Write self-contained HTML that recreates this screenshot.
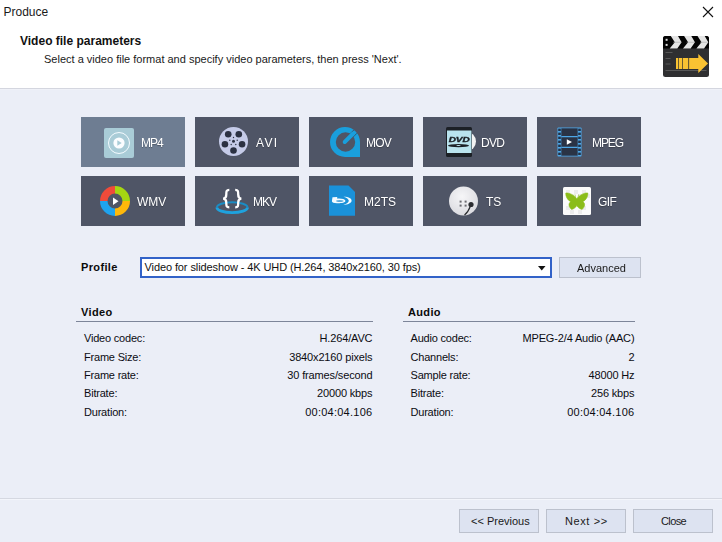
<!DOCTYPE html>
<html><head><meta charset="utf-8">
<style>
*{margin:0;padding:0;box-sizing:border-box}
html,body{width:722px;height:542px;overflow:hidden}
body{position:relative;background:#ebeef7;font-family:"Liberation Sans",sans-serif;color:#1a1a1a;font-size:11px}
.a{position:absolute;white-space:pre;line-height:1}
#hdr{position:absolute;left:0;top:0;width:722px;height:88px;background:#fff}
#hline{position:absolute;left:0;top:88px;width:722px;height:1px;background:#d4d6df}
#hline2{position:absolute;left:0;top:89px;width:722px;height:1px;background:#eff1f8}
.fb{position:absolute;width:104px;height:50px;background:#4f5566}
.fb.sel{background:#6e7d92}
.fb svg{position:absolute}
.fl{position:absolute;color:#fff;font-size:12px;line-height:1;white-space:pre;text-shadow:0 1px 1px rgba(0,0,0,.3);will-change:transform}
.lbl{position:absolute;white-space:pre;line-height:1;font-size:11px;color:#0c0c12;letter-spacing:-.2px}
.val{position:absolute;white-space:pre;line-height:1;font-size:11px;color:#0c0c12;text-align:right;letter-spacing:-.15px}
.btn{position:absolute;background:#dde3f1;border:1px solid #bcc1cd;font-size:11px;line-height:1;color:#1a1a1a}
.btn span{position:absolute;white-space:pre}
</style></head><body>
<div id="hdr"></div>
<div id="hline"></div>
<div id="hline2"></div>
<div class="a" style="left:3.5px;top:6px;font-size:12px;color:#1a1a1a">Produce</div>
<svg style="position:absolute;left:702px;top:6px" width="12" height="12" viewBox="0 0 12 12"><path d="M1 1L11 11M11 1L1 11" stroke="#111" stroke-width="1.1"/></svg>
<div class="a" style="left:20px;top:35px;font-size:12px;font-weight:bold;color:#111">Video file parameters</div>
<div class="a" style="left:44px;top:54px;font-size:11px;color:#1a1a1a">Select a video file format and specify video parameters, then press 'Next'.</div>

<!-- clapboard icon -->
<svg style="position:absolute;left:663px;top:36px" width="46" height="41" viewBox="0 0 46 41">
<rect x="0" y="0" width="46" height="41" rx="2.5" fill="#2f2f31"/>
<path d="M2.5 0H43.5A2.5 2.5 0 0 1 46 2.5V12.6H0V2.5A2.5 2.5 0 0 1 2.5 0z" fill="#040404"/>
<path d="M7.8 0L11.8 6.25L6.7 12.6H14.3L18.6 6.25L15 0z M21.1 0L25.1 6.25L20 12.6H27.6L31.9 6.25L28.3 0z M34.5 0L38.5 6.25L33.4 12.6H41L45.3 6.25L41.7 0z" fill="#e4e4e4"/>
<path d="M10 6.25H18M23.5 6.25H31.5M37 6.25H45" stroke="#9a9a9a" stroke-width=".5"/>
<rect x="2.6" y="2.8" width="2" height="2" fill="#ddd"/><rect x="2.6" y="7.9" width="2" height="2" fill="#ddd"/>
<path d="M2.5 16.5h7M2.5 22.5h5M2.5 28h5M2.5 34.5h41" stroke="#6a6a6a" stroke-width="0.7"/>
<rect x="13" y="22" width="2.3" height="11" fill="#f9c232"/>
<rect x="16" y="22" width="3.3" height="11" fill="#f9c232"/>
<rect x="20" y="22" width="5.3" height="11" fill="#f9c232"/>
<path d="M26.1 22H35.3V18.1L45 27.5L35.3 36.9V33H26.1z" fill="#f9c232"/>
</svg>

<!-- format buttons -->
<div class="fb sel" style="left:81px;top:117px">
 <svg style="left:23px;top:11px" width="30" height="30" viewBox="0 0 30 30">
  <rect x="0" y="0" width="30" height="30" rx="2" fill="#a9ccd7"/>
  <circle cx="15" cy="15" r="10.5" fill="none" stroke="#f4fbff" stroke-width="1"/>
  <circle cx="15" cy="15" r="5.6" fill="#fbfdff"/>
  <path d="M13.3 12.2v5.6l4.4-2.8z" fill="#a9ccd7"/>
 </svg>
 <div class="fl" style="left:60px;top:20px;letter-spacing:-1px">MP4</div>
</div>
<div class="fb" style="left:195px;top:117px">
 <svg style="left:23px;top:9px" width="32" height="32" viewBox="0 0 32 32">
  <circle cx="15.5" cy="15.5" r="14.5" fill="#c5cbe8"/>
  <g fill="#2b3142">
   <circle cx="15.5" cy="24.5" r="3.3"/><circle cx="6.94" cy="18.28" r="3.3"/><circle cx="10.21" cy="8.22" r="3.3"/><circle cx="20.79" cy="8.22" r="3.3"/><circle cx="24.06" cy="18.28" r="3.3"/>
   <circle cx="15.5" cy="15.2" r="1.5"/>
   <circle cx="15.5" cy="11.5" r=".7"/><circle cx="19.2" cy="14.2" r=".7"/><circle cx="17.8" cy="18.5" r=".7"/><circle cx="13.2" cy="18.5" r=".7"/><circle cx="11.8" cy="14.2" r=".7"/>
  </g>
 </svg>
 <div class="fl" style="left:60.5px;top:20px;letter-spacing:1.3px">AVI</div>
</div>
<div class="fb" style="left:309px;top:117px">
 <svg style="left:20px;top:9px" width="32" height="32" viewBox="0 0 32 32">
  <path d="M16 1A15 15 0 1 0 16 31H31V16A15 15 0 0 0 16 1z M16.5 6.3A9.7 9.7 0 1 1 16.5 25.7A9.7 9.7 0 1 1 16.5 6.3z" fill="#1a9fdc" fill-rule="evenodd"/>
  <path d="M24.2 11L28 7.2M21 7.8L24.8 4" stroke="#3a4658" stroke-width=".8"/>
  <path d="M15.7 16L24.2 7.5" stroke="#1a9fdc" stroke-width="4" stroke-linecap="round"/>
 </svg>
 <div class="fl" style="left:57px;top:20px;letter-spacing:-.8px">MOV</div>
</div>
<div class="fb" style="left:423px;top:117px">
 <svg style="left:22px;top:9px" width="32" height="32" viewBox="0 0 32 32">
  <circle cx="21" cy="15.5" r="10" fill="#f2f2f2"/>
  <rect x="1" y="1" width="26" height="30" rx="1.5" fill="#1c2026"/>
  <rect x="2" y="4.5" width="24.5" height="22.5" fill="#b9e3ee"/>
  <text transform="translate(14.2 16.4) scale(1 .78)" font-family="Liberation Sans" font-weight="bold" font-style="italic" font-size="10" text-anchor="middle" fill="#1c2026" stroke="#1c2026" stroke-width=".5" style="will-change:transform">DVD</text>
  <ellipse cx="13.5" cy="19.6" rx="10.5" ry="1.7" fill="#1c2026"/>
  <ellipse cx="13.5" cy="19.5" rx="2.2" ry=".6" fill="#b9e3ee"/>
 </svg>
 <div class="fl" style="left:58px;top:20px;letter-spacing:-.7px">DVD</div>
</div>
<div class="fb" style="left:537px;top:117px">
 <svg style="left:19px;top:9px" width="28" height="32" viewBox="0 0 28 32">
  <rect x="1.5" y="1.5" width="24" height="29" rx=".8" fill="#4ea6e6"/>
  <rect x="5.3" y="2.3" width="16.4" height="27.4" fill="#2a3345"/>
  <path d="M5.3 10.6h16.4M5.3 21.4h16.4" stroke="#4ea6e6" stroke-width="1.1"/>
  <g fill="#243247"><rect x="2.2" y="2.6" width="2.6" height="2.4"/><rect x="2.2" y="6.6" width="2.6" height="2.4"/><rect x="2.2" y="10.6" width="2.6" height="2.4"/><rect x="2.2" y="14.6" width="2.6" height="2.4"/><rect x="2.2" y="18.6" width="2.6" height="2.4"/><rect x="2.2" y="22.6" width="2.6" height="2.4"/><rect x="2.2" y="26.6" width="2.6" height="2.4"/><rect x="22.2" y="2.6" width="2.6" height="2.4"/><rect x="22.2" y="6.6" width="2.6" height="2.4"/><rect x="22.2" y="10.6" width="2.6" height="2.4"/><rect x="22.2" y="14.6" width="2.6" height="2.4"/><rect x="22.2" y="18.6" width="2.6" height="2.4"/><rect x="22.2" y="22.6" width="2.6" height="2.4"/><rect x="22.2" y="26.6" width="2.6" height="2.4"/></g>
  <path d="M10.8 13.2v5.6l5.2-2.8z" fill="#fff"/>
 </svg>
 <div class="fl" style="left:55px;top:20px;letter-spacing:-1.1px">MPEG</div>
</div>

<div class="fb" style="left:81px;top:176px">
 <svg style="left:18px;top:9px" width="32" height="32" viewBox="0 0 32 32">
  <path d="M16 1A15 15 0 0 0 1 16H8.5A7.5 7.5 0 0 1 16 8.5z" fill="#f04b3a"/>
  <path d="M16 1A15 15 0 0 1 31 16H23.5A7.5 7.5 0 0 0 16 8.5z" fill="#a6d612"/>
  <path d="M31 16A15 15 0 0 1 16 31V23.5A7.5 7.5 0 0 0 23.5 16z" fill="#ffb80a"/>
  <path d="M16 31A15 15 0 0 1 1 16H8.5A7.5 7.5 0 0 0 16 23.5z" fill="#1fa3ef"/>
  <path d="M14 12.5v7.5l5.5-3.75z" fill="#fff"/>
 </svg>
 <div class="fl" style="left:56px;top:20px">WMV</div>
</div>
<div class="fb" style="left:195px;top:176px">
 <svg style="left:20px;top:9px" width="36" height="32" viewBox="0 0 36 32">
  <path d="M1.9 22.4A14.9 5 0 0 1 32.5 22.4" fill="none" stroke="#1a8cc4" stroke-width="2"/>
  <path d="M14.3 4.8C11.2 4.8 11.3 6.5 11.3 9.5C11.3 12 11 13.3 8.2 13.6C11 13.9 11.3 15.2 11.3 17.7C11.3 20.8 11.2 22.4 14.3 22.4M20.2 4.8C23.3 4.8 23.2 6.5 23.2 9.5C23.2 12 23.5 13.3 26.3 13.6C23.5 13.9 23.2 15.2 23.2 17.7C23.2 20.8 23.3 22.4 20.2 22.4" fill="none" stroke="#fff" stroke-width="2.3"/>
  <path d="M1.9 22.4A15.3 5.3 0 0 0 32.5 22.4" fill="none" stroke="#1ea2de" stroke-width="2.8"/>
 </svg>
 <div class="fl" style="left:58px;top:20px;letter-spacing:-1px">MKV</div>
</div>
<div class="fb" style="left:309px;top:176px">
 <svg style="left:19px;top:9px" width="28" height="32" viewBox="0 0 28 32">
  <path d="M1 .5H20.5L27 7V30.7H1z" fill="#1a91d9"/>
  <path d="M4.5 12.2L9.3 12L9 13.6C13 13.2 17 14 17.4 15.8C17.6 17.8 13 18.3 9 18.2C6 18.1 3.8 17.6 3.9 16.3C4 14.8 4.3 13.5 4.5 12.2z" fill="#f4fbff"/>
  <ellipse cx="11.8" cy="15.9" rx="3.8" ry=".75" fill="#2a8fcf"/>
  <path d="M15.5 11.7C21 11.7 23.8 13.5 23.6 15.7C23.4 18.2 19.5 19.7 15.3 19.8C19 18.8 20.8 17.3 20.8 15.8C20.8 14.2 18.8 12.5 15.5 11.7z" fill="#f4fbff"/>
 </svg>
 <div class="fl" style="left:55px;top:20px">M2TS</div>
</div>
<div class="fb" style="left:423px;top:176px">
 <svg style="left:24px;top:7.6px" width="32" height="32" viewBox="0 0 32 32">
  <defs><radialGradient id="tsg" cx=".45" cy=".35" r=".7"><stop offset="0" stop-color="#f6f6f8"/><stop offset="1" stop-color="#d9d9de"/></radialGradient></defs>
  <circle cx="16.5" cy="17" r="14.5" fill="url(#tsg)"/>
  <g fill="#6a6a70"><rect x="12.6" y="16.6" width="2" height="2"/><rect x="17.6" y="16.6" width="2" height="2"/><rect x="12.6" y="20.6" width="2" height="2"/><rect x="17.6" y="20.6" width="2" height="2"/></g>
  <circle cx="24" cy="20.5" r="2.6" fill="#2a2c30"/>
  <path d="M23.5 22C22 26 20 29 17.5 31" stroke="#2a2c30" stroke-width="1.2" fill="none"/>
 </svg>
 <div class="fl" style="left:63px;top:20px">TS</div>
</div>
<div class="fb" style="left:537px;top:176px">
 <svg style="left:25px;top:10px" width="30" height="30" viewBox="0 0 30 30">
  <rect x="1" y="1" width="28" height="28" rx="1.5" fill="#fbfbfb"/>
  <g fill="#ececec"><rect x="4" y="4" width="4" height="4"/><rect x="12" y="4" width="4" height="4"/><rect x="20" y="4" width="4" height="4"/><rect x="8" y="8" width="4" height="4"/><rect x="16" y="8" width="4" height="4"/><rect x="24" y="8" width="4" height="4"/><rect x="4" y="20" width="4" height="4"/><rect x="20" y="20" width="4" height="4"/><rect x="8" y="24" width="4" height="4"/><rect x="16" y="24" width="4" height="4"/></g>
  <path d="M14.8 13C12.3 9 7.2 6.6 3.8 7C3.5 10.5 5.5 14 8.8 15.8C6.3 17 6.3 20.5 9.5 23.4C11.6 23 13.7 21.7 14.8 19.5C15.9 21.7 18 23 20.1 23.4C23.3 20.5 23.3 17 20.8 15.8C24.1 14 26.1 10.5 25.8 7C22.4 6.6 17.3 9 14.8 13z M13.8 13L13 8.5M15.8 13L16.6 8.5" fill="#8bbd19" stroke="#8bbd19" stroke-width=".6"/>
 </svg>
 <div class="fl" style="left:61px;top:20px;letter-spacing:-.6px">GIF</div>
</div>

<!-- profile -->
<div class="a" style="left:81px;top:262px;font-size:11px;font-weight:bold;color:#0a0a0a;letter-spacing:.35px">Profile</div>
<div style="position:absolute;left:140px;top:257px;width:412px;height:21px;background:#fff;border:2px solid #3262c8"></div>
<div class="a" style="left:144.5px;top:262px;font-size:11px;color:#111;letter-spacing:-.1px">Video for slideshow - 4K UHD (H.264, 3840x2160, 30 fps)</div>
<svg style="position:absolute;left:538px;top:266px" width="8" height="5" viewBox="0 0 8 5"><path d="M0 0h7.5l-3.75 4.5z" fill="#111"/></svg>
<div class="btn" style="left:559px;top:257px;width:82px;height:21px"><span style="left:17px;top:5px">Advanced</span></div>

<!-- video -->
<div class="a" style="left:81px;top:307px;font-size:11px;font-weight:bold;color:#0a0a0a;letter-spacing:.35px">Video</div>
<div style="position:absolute;left:76px;top:321px;width:297px;height:1px;background:#7d8599"></div>
<div class="lbl" style="left:84px;top:333px">Video codec:</div>
<div class="lbl" style="left:84px;top:352px">Frame Size:</div>
<div class="lbl" style="left:84px;top:370px">Frame rate:</div>
<div class="lbl" style="left:84px;top:388px">Bitrate:</div>
<div class="lbl" style="left:84px;top:407px">Duration:</div>
<div class="val" style="right:349.6px;top:333px">H.264/AVC</div>
<div class="val" style="right:349.6px;top:352px">3840x2160 pixels</div>
<div class="val" style="right:349.6px;top:370px">30 frames/second</div>
<div class="val" style="right:349.6px;top:388px">20000 kbps</div>
<div class="val" style="right:349.6px;top:407px;letter-spacing:.25px">00:04:04.106</div>

<!-- audio -->
<div class="a" style="left:408px;top:307px;font-size:11px;font-weight:bold;color:#0a0a0a;letter-spacing:.35px">Audio</div>
<div style="position:absolute;left:403px;top:321px;width:232px;height:1px;background:#7d8599"></div>
<div class="lbl" style="left:410.5px;top:333px">Audio codec:</div>
<div class="lbl" style="left:410.5px;top:352px">Channels:</div>
<div class="lbl" style="left:410.5px;top:370px">Sample rate:</div>
<div class="lbl" style="left:410.5px;top:388px">Bitrate:</div>
<div class="lbl" style="left:410.5px;top:407px">Duration:</div>
<div class="val" style="right:87.6px;top:333px">MPEG-2/4 Audio (AAC)</div>
<div class="val" style="right:87.6px;top:352px">2</div>
<div class="val" style="right:87.6px;top:370px">48000 Hz</div>
<div class="val" style="right:87.6px;top:388px">256 kbps</div>
<div class="val" style="right:87.6px;top:407px;letter-spacing:.25px">00:04:04.106</div>

<!-- footer -->
<div style="position:absolute;left:0;top:498px;width:722px;height:1px;background:#d5d8e1"></div>
<div style="position:absolute;left:0;top:499px;width:722px;height:1px;background:#f3f5fb"></div>
<div class="btn" style="left:459px;top:509px;width:80px;height:24px"><span style="left:11px;top:6px">&lt;&lt; Previous</span></div>
<div class="btn" style="left:546px;top:509px;width:80px;height:24px"><span style="left:18px;top:6px;letter-spacing:.6px">Next &gt;&gt;</span></div>
<div class="btn" style="left:633px;top:509px;width:80px;height:24px"><span style="left:27px;top:6px;letter-spacing:-.6px">Close</span></div>
</body></html>
